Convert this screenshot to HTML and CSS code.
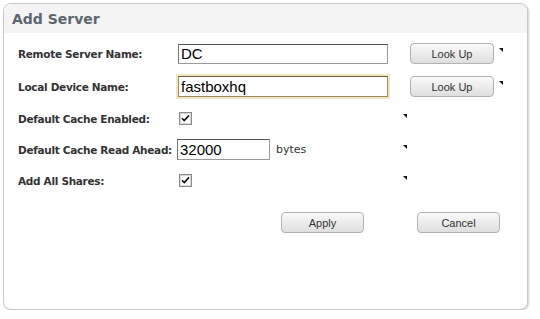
FILE: index.html
```html
<!DOCTYPE html>
<html lang="en">

<head>
    <meta charset="utf-8">
    <title>Add Server</title>
    <link rel="stylesheet" href="styles.css">
</head>

<body>
    <section class="panel">
        <header class="panel-head">
            <h1>Add Server</h1>
        </header>

        <form class="form">
            <!--REMOTE SERVER-->
            <div class="row row-lookup">
                <label class="label">Remote Server Name:</label>
                <input class="text wide" type="text" value="DC">
                <button type="button" class="btn btn-lookup">Look Up</button>
                <span class="marker"></span>
            </div>

            <!--LOCAL DEVICE-->
            <div class="row row-lookup">
                <label class="label">Local Device Name:</label>
                <input class="text wide focus" type="text" value="fastboxhq">
                <button type="button" class="btn btn-lookup">Look Up</button>
                <span class="marker"></span>
            </div>

            <div class="row">
                <label class="label">Default Cache Enabled:</label>
                <div class="field">
                    <span class="check">
                        <svg width="13" height="13" viewBox="0 0 13 13">
                            <rect x="0.5" y="0.5" width="12" height="12" fill="#fff" stroke="#8a8a8a" />
                            <rect x="1.5" y="1.5" width="10" height="10" fill="none" stroke="#d8d8d8" />
                            <path d="M3 6.2 L5.2 8.6 L10 3.4" fill="none" stroke="#111" stroke-width="1.6" />
                        </svg>
                    </span>
                </div>
                <span class="marker"></span>
            </div>

            <div class="row">
                <label class="label">Default Cache Read Ahead:</label>
                <div class="field">
                    <input class="text short" type="text" value="32000">
                    <span class="unit">bytes</span>
                </div>
                <span class="marker"></span>
            </div>

            <div class="row">
                <label class="label">Add All Shares:</label>
                <div class="field">
                    <span class="check">
                        <svg width="13" height="13" viewBox="0 0 13 13">
                            <rect x="0.5" y="0.5" width="12" height="12" fill="#fff" stroke="#8a8a8a" />
                            <rect x="1.5" y="1.5" width="10" height="10" fill="none" stroke="#d8d8d8" />
                            <path d="M3 6.2 L5.2 8.6 L10 3.4" fill="none" stroke="#111" stroke-width="1.6" />
                        </svg>
                    </span>
                </div>
                <span class="marker"></span>
            </div>

            <!--KNAPPER-->
            <div class="actions">
                <button type="button" class="btn btn-action">Apply</button>
                <button type="button" class="btn btn-action">Cancel</button>
            </div>
        </form>
    </section>
</body>

</html>
```

FILE: styles.css
```css
/*GENERELT*/
* {
    margin: 0;
    padding: 0;
    box-sizing: border-box;
}

body {
    margin: 0;
    padding: 3px 0 0 3px;
    background: #fff;
    font-family: 'DejaVu Sans', sans-serif;
}

/*PANEL*/
.panel {
    width: 525px;
    height: 307px;
    border: 1px solid #c9c9c9;
    border-radius: 8px;
    box-shadow: 1px 1px 2px rgba(0, 0, 0, 0.18);
    overflow: hidden;
    background: #fff;
}

.panel-head {
    height: 29px;
    background: #f4f4f4;
    padding: 7px 0 0 8px;
}

.panel-head h1 {
    font-size: 14px;
    font-weight: bold;
    color: #5d666f;
}

/*FORM*/
.form {
    padding: 4px 0 0 14px;
}

.row {
    display: flex;
    align-items: center;
    height: 31px;
}

.row-lookup {
    height: 33px;
}

.label {
    width: 160px;
    font-size: 10.5px;
    font-weight: bold;
    letter-spacing: -0.3px;
    color: #333;
}

.field {
    width: 225px;
    display: flex;
    align-items: center;
}

.text {
    height: 20px;
    border: 1px solid #9a9a9a;
    border-top-color: #555;
    border-left-color: #777;
    padding: 0 2px;
    font-family: 'Liberation Sans', sans-serif;
    font-size: 15px;
    color: #000;
    outline: none;
}

.wide {
    width: 210px;
}

.focus {
    height: 21px;
    border: 1px solid #9c8a5a;
    border-top-color: #6e5f36;
    box-shadow: 0 0 0 2px #f1e6c4;
}

.short {
    width: 93px;
    height: 21px;
    margin-left: -1px;
}

.unit {
    margin-left: 6px;
    font-size: 11px;
    color: #333;
}

.check {
    display: block;
    height: 13px;
    margin-left: 1px;
}

.check svg {
    display: block;
}

/*MARKER*/
.marker {
    align-self: flex-start;
    margin-top: 11px;
    width: 0;
    height: 0;
    border-top: 4px solid #111;
    border-left: 4px solid transparent;
}

.row-lookup .marker {
    margin-left: 5px;
}

/*KNAPPER*/
.btn {
    height: 21px;
    border: 1px solid #b3b3b3;
    border-radius: 4px;
    background: linear-gradient(#fafafa, #dedede);
    font-family: 'Liberation Sans', sans-serif;
    font-size: 11px;
    color: #333;
}

.btn-lookup {
    width: 84px;
    margin-left: 22px;
}

.actions {
    display: flex;
    gap: 53px;
    padding: 16px 0 0 263px;
}

.btn-action {
    width: 83px;
}
```
